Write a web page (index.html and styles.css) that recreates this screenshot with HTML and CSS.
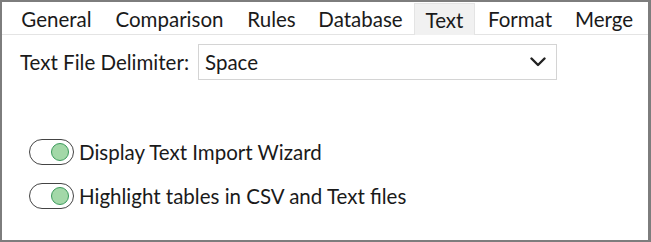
FILE: index.html
```html
<!DOCTYPE html>
<html>
<head>
<meta charset="utf-8">
<link rel="stylesheet" href="styles.css">
</head>
<body>
<div class="frame">
  <div class="tabs">
    <div class="tab t-general">General</div>
    <div class="tab t-comparison">Comparison</div>
    <div class="tab t-rules">Rules</div>
    <div class="tab t-database">Database</div>
    <div class="tab t-text active">Text</div>
    <div class="tab t-format">Format</div>
    <div class="tab t-merge">Merge</div>
  </div>
  <div class="row">
    <span class="label">Text File Delimiter:</span>
    <div class="select">
      <span>Space</span>
      <svg class="chev" width="16" height="10" viewBox="0 0 16 10"><path d="M1.5 1.5 L8 8 L14.5 1.5" fill="none" stroke="#222" stroke-width="2.4" stroke-linecap="round" stroke-linejoin="round"/></svg>
    </div>
  </div>
  <div class="options">
    <div class="opt"><span class="toggle"><span class="knob"></span></span><span>Display Text Import Wizard</span></div>
    <div class="opt"><span class="toggle"><span class="knob"></span></span><span>Highlight tables in CSV and Text files</span></div>
  </div>
</div>
</body>
</html>
```
FILE: styles.css
```css
html, body { margin: 0; padding: 0; background: #fff; }
body { font-family: Lato, "Open Sans", sans-serif; font-size: 20.5px; color: #1a1a1a; }
.frame {
  width: 651px; height: 242px; box-sizing: border-box;
  border-style: solid; border-color: #7d7d7d;
  border-width: 2px 3px 2px 2px;
  background: #fff;
}
.tabs {
  display: flex; height: 33px; padding-left: 8px; box-sizing: border-box;
  border-bottom: 1px solid #e4e4e4;
}
.tab {
  text-align: center; line-height: 34px; height: 32px; box-sizing: border-box;
  white-space: nowrap;
}
.t-general { width: 93px; }
.t-comparison { width: 133px; }
.t-rules { width: 71px; }
.t-database { width: 107px; }
.t-text { width: 61px; }
.t-format { width: 90px; }
.t-merge { width: 78px; }
.tab.active {
  background: #f1f1f1; border: 1px solid #e4e4e4; border-bottom: none;
  margin-top: 1px; line-height: 32px;
}
.row {
  display: flex; align-items: center; padding: 9px 0 0 18px;
}
.label { margin-right: 9px; }
.select {
  width: 359px; height: 36px; box-sizing: border-box;
  border: 1px solid #d4d4d4; display: flex; align-items: center;
  justify-content: space-between; padding: 0 10px 0 6px;
}
.chev { display: block; }
.options { padding: 59px 0 0 27px; display: flex; flex-direction: column; gap: 18px; }
.opt { display: flex; align-items: center; gap: 5px; height: 26px; }
.toggle {
  width: 45px; height: 26px; box-sizing: border-box;
  border: 1.5px solid #444; border-radius: 13px; position: relative;
  display: block; background: #fff;
}
.knob {
  position: absolute; right: 4px; top: 2.5px;
  border-radius: 50%; background: #a3d8a8; border: 1.5px solid #3c9a5c;
  box-sizing: border-box; width: 18px; height: 18px;
}
```
